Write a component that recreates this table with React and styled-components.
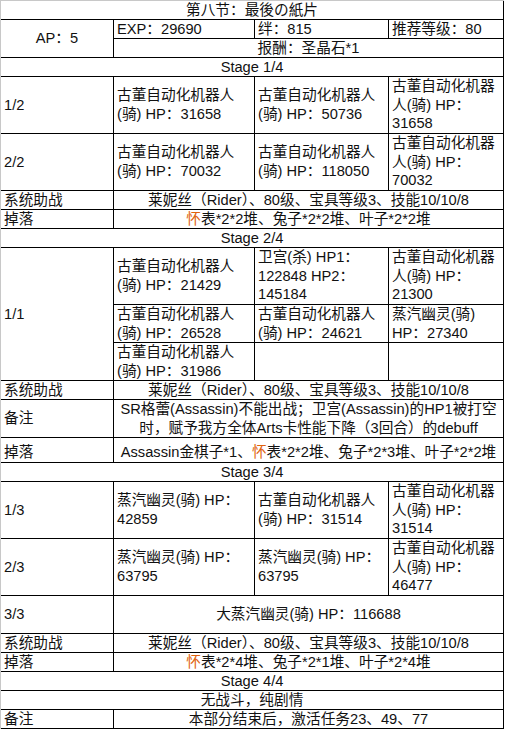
import styled, { createGlobalStyle } from "styled-components";

const GlobalStyle = createGlobalStyle`
  html, body {
    margin: 0;
    padding: 0;
    background: #fff;
  }
  body {
    font-family: "Liberation Sans", "Noto Sans CJK SC", sans-serif;
  }
`;

const ROWS = [
  19, 19, 19, 19, 57, 57, 19, 19, 19, 57, 38, 38, 19, 38, 25, 19, 57, 57, 38,
  19, 19, 19, 19, 19,
];

const Sheet = styled.div`
  display: grid;
  grid-template-columns: 113px 141px 134px 115px;
  grid-template-rows: ${(p) => p.$rows};
  width: max-content;
  border-top: 1px solid #c8c8c8;
  border-left: 1px solid #c8c8c8;
  font-size: 14.67px;
  line-height: 18.67px;
  color: #111;
`;

const Box = styled.div`
  grid-column: span ${(p) => p.$span || 1};
  grid-row: span ${(p) => p.$rowSpan || 1};
  display: flex;
  align-items: ${(p) => (p.$bottom ? "flex-end" : "center")};
  padding: 0 3px;
  border-right: 1px solid #000;
  border-bottom: 1px solid #000;
  overflow: hidden;
  min-width: 0;
`;

const Text = styled.span`
  display: block;
  width: 100%;
  text-align: ${(p) => (p.$center ? "center" : "left")};
  white-space: ${(p) => (p.$nowrap ? "nowrap" : "normal")};
`;

const Mark = styled.span`
  color: #e0620d;
`;

const Cell = ({ span, rowSpan, center, nowrap, bottom, children }) => (
  <Box $span={span} $rowSpan={rowSpan} $bottom={bottom}>
    <Text $center={center} $nowrap={nowrap}>
      {children}
    </Text>
  </Box>
);

const robot = (hp) => `古董自动化机器人(骑) HP：${hp}`;
const ghost = (hp) => `蒸汽幽灵(骑) HP：${hp}`;
const support = "莱妮丝（Rider）、80级、宝具等级3、技能10/10/8";

const App = () => {
  return (
    <>
      <GlobalStyle />
      <Sheet $rows={ROWS.map((h) => h + "px").join(" ")}>
        <Cell span={4} center>第八节：最後の紙片</Cell>

        <Cell rowSpan={2} center>AP：5</Cell>
        <Cell>EXP：29690</Cell>
        <Cell>绊：815</Cell>
        <Cell>推荐等级：80</Cell>
        <Cell span={3} center>报酬：圣晶石*1</Cell>

        <Cell span={4} center>Stage 1/4</Cell>
        <Cell>1/2</Cell>
        <Cell>{robot(31658)}</Cell>
        <Cell>{robot(50736)}</Cell>
        <Cell>{robot(31658)}</Cell>
        <Cell>2/2</Cell>
        <Cell>{robot(70032)}</Cell>
        <Cell>{robot(118050)}</Cell>
        <Cell>{robot(70032)}</Cell>
        <Cell>系统助战</Cell>
        <Cell span={3} center>{support}</Cell>
        <Cell>掉落</Cell>
        <Cell span={3} center>
          <Mark>怀</Mark>表*2*2堆、兔子*2*2堆、叶子*2*2堆
        </Cell>

        <Cell span={4} center>Stage 2/4</Cell>
        <Cell rowSpan={3}>1/1</Cell>
        <Cell>{robot(21429)}</Cell>
        <Cell>卫宫(杀) HP1：122848 HP2：145184</Cell>
        <Cell>{robot(21300)}</Cell>
        <Cell>{robot(26528)}</Cell>
        <Cell>{robot(24621)}</Cell>
        <Cell>{ghost(27340)}</Cell>
        <Cell>{robot(31986)}</Cell>
        <Cell />
        <Cell />
        <Cell>系统助战</Cell>
        <Cell span={3} center>{support}</Cell>
        <Cell>备注</Cell>
        <Cell span={3} center nowrap>
          SR格蕾(Assassin)不能出战；卫宫(Assassin)的HP1被打空
          <br />
          时，赋予我方全体Arts卡性能下降（3回合）的debuff
        </Cell>
        <Cell bottom>掉落</Cell>
        <Cell span={3} center bottom>
          Assassin金棋子*1、<Mark>怀</Mark>表*2*2堆、兔子*2*3堆、叶子*2*2堆
        </Cell>

        <Cell span={4} center>Stage 3/4</Cell>
        <Cell>1/3</Cell>
        <Cell>{ghost(42859)}</Cell>
        <Cell>{robot(31514)}</Cell>
        <Cell>{robot(31514)}</Cell>
        <Cell>2/3</Cell>
        <Cell>{ghost(63795)}</Cell>
        <Cell>{ghost(63795)}</Cell>
        <Cell>{robot(46477)}</Cell>
        <Cell>3/3</Cell>
        <Cell span={3} center>大蒸汽幽灵(骑) HP：116688</Cell>
        <Cell>系统助战</Cell>
        <Cell span={3} center>{support}</Cell>
        <Cell>掉落</Cell>
        <Cell span={3} center>
          <Mark>怀</Mark>表*2*4堆、兔子*2*1堆、叶子*2*4堆
        </Cell>

        <Cell span={4} center>Stage 4/4</Cell>
        <Cell span={4} center>无战斗，纯剧情</Cell>
        <Cell>备注</Cell>
        <Cell span={3} center>本部分结束后，激活任务23、49、77</Cell>
      </Sheet>
    </>
  );
};

export default App;
